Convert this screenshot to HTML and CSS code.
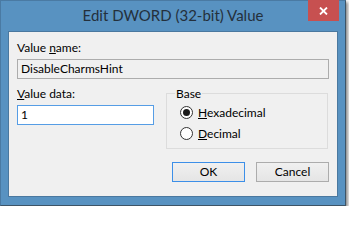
FILE: index.html
```html
<!DOCTYPE html>
<html>
<head>
<meta charset="utf-8">
<link rel="stylesheet" href="styles.css">
</head>
<body>
<div class="window">
  <div class="titlebar">
    <div class="spacer"></div>
    <div class="title">Edit DWORD (32-bit) Value</div>
    <div class="close">
      <svg width="9" height="8" viewBox="0 0 9 8"><path d="M1 0.5 L8 7.5 M8 0.5 L1 7.5" stroke="#fff" stroke-width="1.8" fill="none"/></svg>
    </div>
  </div>
  <div class="panel">
    <div class="label">Value <u>n</u>ame:</div>
    <div class="textbox readonly">DisableCharmsHint</div>
    <div class="row">
      <div class="datacol">
        <div class="label"><u>V</u>alue data:</div>
        <div class="textbox focus">1</div>
      </div>
      <fieldset class="group">
        <legend>Base</legend>
        <div class="radio-row"><span class="radio checked"></span><span><u>H</u>exadecimal</span></div>
        <div class="radio-row"><span class="radio"></span><span><u>D</u>ecimal</span></div>
      </fieldset>
    </div>
    <div class="buttons">
      <div class="btn default">OK</div>
      <div class="btn">Cancel</div>
    </div>
  </div>
</div>
</body>
</html>
```
FILE: styles.css
```css
html, body {
  margin: 0;
  padding: 0;
  background: #ffffff;
}
body {
  font-family: Lato, "Liberation Sans", sans-serif;
  font-size: 12px;
  color: #000;
}
.window {
  box-sizing: border-box;
  width: 346px;
  height: 206px;
  background: #5892c1;
  border: 1px solid #4a7aa3;
  border-right-color: #3d5466;
  border-bottom-color: #3d5466;
  box-shadow: 2px 2px 3px rgba(0,0,0,0.45);
  display: flex;
  flex-direction: column;
}
.titlebar {
  height: 30px;
  display: grid;
  grid-template-columns: 1fr auto 1fr;
  align-items: start;
}
.title {
  font-size: 15px;
  line-height: 20px;
  padding-top: 4px;
  color: #24303c;
  white-space: nowrap;
}
.close {
  justify-self: end;
  margin-right: 6px;
  margin-top: -1px;
  width: 31px;
  height: 21px;
  background: #c75050;
  display: flex;
  align-items: center;
  justify-content: center;
}
.close svg { display: block; }
.panel {
  box-sizing: border-box;
  margin: 0 7px 0 7px;
  height: 166px;
  background: #f0f0f0;
  border: 1px solid #4a789f;
  padding: 8px 8px 0 8px;
  display: flex;
  flex-direction: column;
}
.label {
  line-height: 15px;
  height: 15px;
  white-space: nowrap;
}
.textbox {
  box-sizing: border-box;
  height: 20px;
  line-height: 18px;
  padding-left: 3px;
  margin-top: 4px;
  white-space: nowrap;
}
.readonly {
  background: #f0f0f0;
  border: 1px solid #acacac;
}
.focus {
  background: #ffffff;
  border: 1px solid #569de5;
}
.row {
  display: flex;
  gap: 12px;
  margin-top: 7px;
}
.datacol {
  width: 137px;
}
.datacol .textbox { margin-top: 4px; }
.group {
  box-sizing: border-box;
  width: 162px;
  margin: 0;
  padding: 4px 0 7px 13px;
  border: 1px solid #dcdcdc;
  min-width: 0;
}
.group legend {
  padding: 0 1px;
  margin-left: -5px;
  line-height: 15px;
}
.radio-row {
  display: flex;
  align-items: center;
  gap: 5px;
  height: 15px;
  line-height: 15px;
}
.radio-row + .radio-row { margin-top: 6px; }
.radio {
  box-sizing: border-box;
  width: 13px;
  height: 13px;
  border-radius: 50%;
  border: 1px solid #333;
  background: #fff;
  display: flex;
  align-items: center;
  justify-content: center;
}
.radio.checked::after {
  content: "";
  width: 7px;
  height: 7px;
  border-radius: 50%;
  background: #1a1a1a;
}
.buttons {
  display: flex;
  justify-content: flex-end;
  gap: 11px;
  margin-top: 13px;
}
.btn {
  box-sizing: border-box;
  width: 73px;
  height: 20px;
  line-height: 18px;
  text-align: center;
  border: 1px solid #acacac;
  background: linear-gradient(#f0f0f0, #e5e5e5);
}
.btn.default {
  border-color: #3c8fe8;
}
```
